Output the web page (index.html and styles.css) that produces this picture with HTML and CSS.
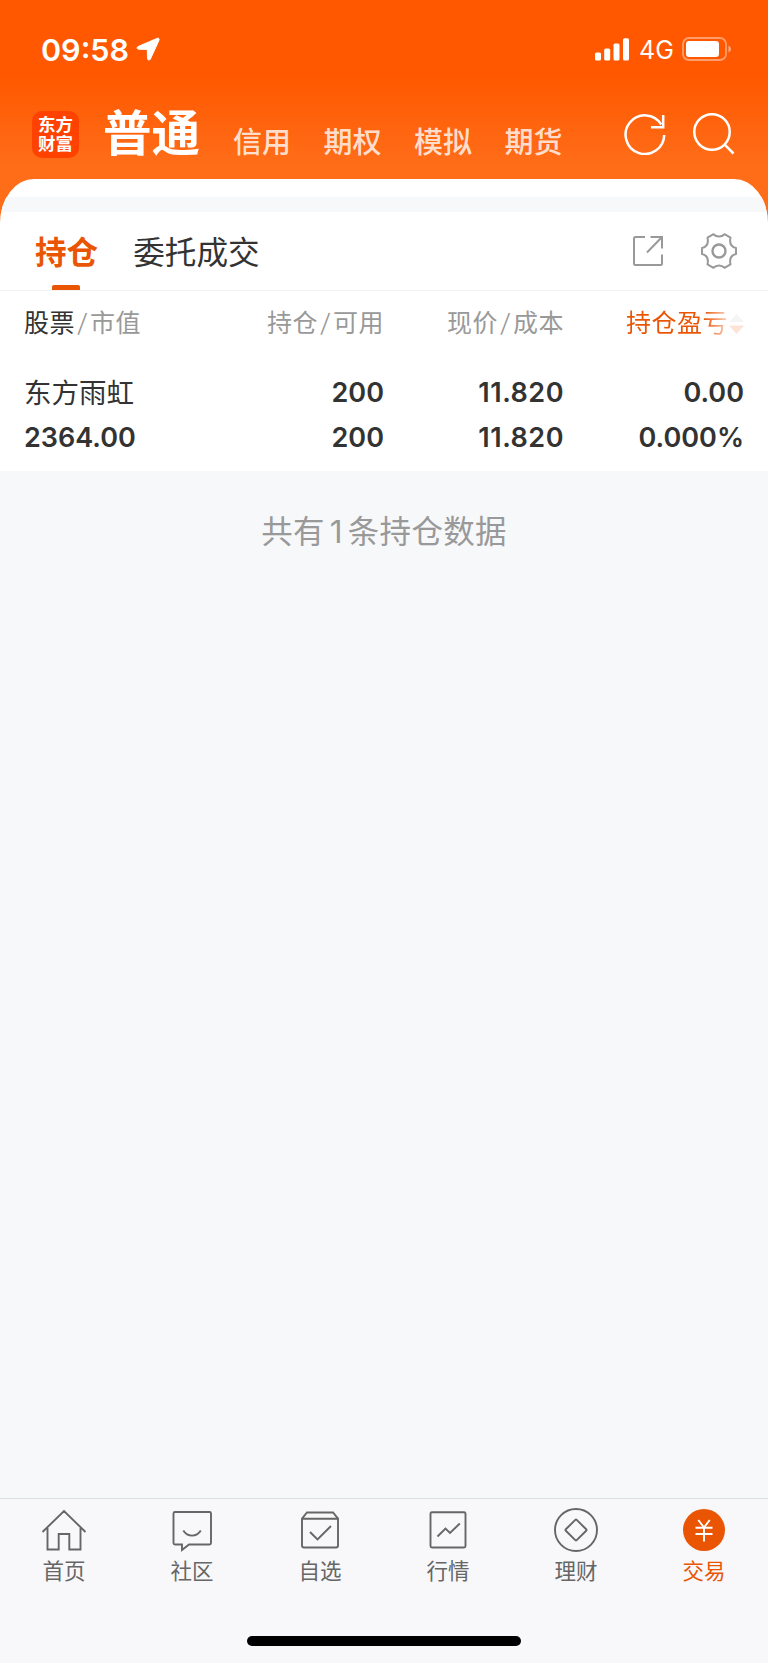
FILE: index.html
```html
<!DOCTYPE html>
<html lang="zh-CN">
<head>
  <meta charset="UTF-8" />
  <meta name="viewport" content="width=device-width, initial-scale=1" />
  <title>东方财富 - 交易</title>
  <link rel="stylesheet" href="styles.css">
</head>
<body>

  <header class="header">
    <div class="status-bar">
      <span class="time">09:58</span>
      <svg class="location" width="24" height="24" viewBox="0 0 24 24"><path d="M21.5 1.2 2 9.6c-1.5.7-1 2.6.5 2.6l8.8.2.2 9c0 1.9 2.2 2.2 2.900.7L23 3.200c.5-1.200-.3-2.400-1.500-2z" fill="#fff" stroke="#fff" stroke-width="1" stroke-linejoin="round"/></svg>
      <div class="status-right">
        <svg width="34" height="23" viewBox="0 0 34 23" fill="#fff">
          <rect x="0" y="14.5" width="6" height="8" rx="1.5"/>
          <rect x="9.2" y="10.5" width="6" height="12" rx="1.5"/>
          <rect x="18.5" y="5.5" width="6" height="17" rx="1.5"/>
          <rect x="28" y="0.3" width="6" height="22.2" rx="1.5"/>
        </svg>
        <span class="network">4G</span>
        <svg width="50" height="24" viewBox="0 0 50 24">
          <rect x="1" y="1" width="43" height="22" rx="6" fill="none" stroke="#fff" stroke-opacity=".42" stroke-width="1.8"/>
          <rect x="4" y="4" width="33" height="16" rx="3" fill="#fff"/>
          <path d="M46.5 8.500c3.300 1.500 3.300 5.500 0 7z" fill="#fff" fill-opacity=".5"/>
        </svg>
      </div>
    </div>

    <div class="nav">
      <div class="logo"><span>东方</span><span>财富</span></div>
      <h1>普通</h1>
      <a>信用</a>
      <a>期权</a>
      <a>模拟</a>
      <a>期货</a>
      <div class="nav-icons">
        <svg width="42" height="42" viewBox="0 0 42 42" fill="none" stroke="#fff" stroke-width="2.5">
          <path d="M40.200 22A19.300 19.300 0 1 1 37.300 11.500"/>
          <path d="M39.200 2v12.200H27"/>
        </svg>
        <svg width="42" height="42" viewBox="0 0 42 42" fill="none" stroke="#fff" stroke-width="2.5">
          <circle cx="19" cy="19" r="17.7"/>
          <path d="M31.200 31.200 40.500 40.500"/>
        </svg>
      </div>
    </div>
  </header>

  <main class="sheet">
    <div class="divider"></div>

    <div class="tabs">
      <div class="tab active">持仓</div>
      <div class="tab">委托成交</div>
      <div class="tab-icons">
        <svg width="30" height="30" viewBox="0 0 30 30" fill="none" stroke="#999" stroke-width="2">
          <path d="M12 1H2.500Q1 1 1 2.500V27.500Q1 29 2.500 29H27.500Q29 29 29 27.500V18.500"/>
          <path d="M17.500 1H29V12.500M29 1 14 16.500"/>
        </svg>
        <svg width="36" height="36" viewBox="0 0 36 36" fill="none" stroke="#999" stroke-width="2" stroke-linejoin="round">
          <path d="M12.500 1.200C15.500 4.300 20.500 4.300 23.500 1.200L29.500 4.600C28.200 10.500 30 13.800 35 15V21C30 22.200 28.200 25.500 29.500 31.400L23.500 34.800C20.500 31.700 15.500 31.700 12.500 34.800L6.500 31.400C7.800 25.500 6 22.200 1 21V15C6 13.800 7.800 10.500 6.500 4.600Z"/>
          <circle cx="18" cy="18" r="6.5" stroke-width="2.400"/>
        </svg>
      </div>
    </div>

    <div class="row table-head">
      <div><span class="dark">股票</span><i>/</i>市值</div>
      <div>持仓<i>/</i>可用</div>
      <div>现价<i>/</i>成本</div>
      <div class="profit">
        <span>持仓盈亏</span>
        <svg width="15" height="22" viewBox="0 0 15 22"><path d="M0 9 7.500 1 15 9z" fill="#f5f5f6"/><path d="M0 12.500 7.500 21 15 12.500z" fill="#fde3d6"/></svg>
      </div>
    </div>

    <div class="row stock">
      <div><span class="name">东方雨虹</span><span>2364.00</span></div>
      <div><span>200</span><span>200</span></div>
      <div><span class="price">11.820</span><span class="price">11.820</span></div>
      <div><span>0.00</span><span>0.000%</span></div>
    </div>
  </main>

  <p class="summary">共有<b>1</b>条持仓数据</p>

  <nav class="tabbar">
    <a class="item">
      <svg width="46" height="46" viewBox="0 0 46 46">
        <path d="M1.500 25 23 4 44.500 25M6.500 21V42.500H17.700V27H28.300V42.500H39.500V21"/>
      </svg>
      <span>首页</span>
    </a>
    <a class="item">
      <svg width="46" height="46" viewBox="0 0 46 46">
        <path d="M6 5H40.500Q42 5 42 6.500V36Q42 37.500 40.500 37.500H20L13 43V37.500H6Q4.500 37.500 4.500 36V6.500Q4.500 5 6 5Z"/>
        <path d="M14.300 23.500C18.500 30.300 27.500 30.300 31.800 23.500"/>
      </svg>
      <span>社区</span>
    </a>
    <a class="item">
      <svg width="46" height="46" viewBox="0 0 46 46">
        <path d="M5 11.700H41V38.500Q41 40.500 39 40.500H7Q5 40.500 5 38.500V11.700L10 5.500H36L41 11.700"/>
        <path d="M13 25 20.500 32.500 34 19"/>
      </svg>
      <span>自选</span>
    </a>
    <a class="item">
      <svg width="46" height="46" viewBox="0 0 46 46">
        <rect x="5.500" y="5.300" width="35" height="35.200" rx="1.500"/>
        <path d="M12.500 29.500 20.500 21.500 25 26 34.800 16.500"/>
      </svg>
      <span>行情</span>
    </a>
    <a class="item">
      <svg width="46" height="46" viewBox="0 0 46 46">
        <circle cx="23" cy="23" r="21"/>
        <rect x="15.300" y="15.300" width="15.400" height="15.400" rx="1" transform="rotate(45 23 23)"/>
      </svg>
      <span>理财</span>
    </a>
    <a class="item current">
      <svg width="46" height="46" viewBox="0 0 46 46">
        <circle class="coin" cx="23" cy="23" r="21"/>
        <path class="yen" d="M17.300 13 23 20.500 28.700 13M14.500 20.700H31.500M14.500 27H31.500M23 20.500V34.500"/>
      </svg>
      <span>交易</span>
    </a>
    <div class="home-indicator"></div>
  </nav>

</body>
</html>
```

FILE: styles.css
```css
* { box-sizing: border-box; margin: 0; padding: 0; }

body {
  display: flex;
  flex-direction: column;
  height: 1663px;
  background: #f7f8fa;
  color: #333;
  font-family: Inter, "Noto Sans CJK SC", sans-serif;
}

.header {
  height: 230px;
  background: linear-gradient(#ff5800 0, #ff5800 76px, #ff6d19 165px, #ff6d19 100%);
  color: #fff;
}

.status-bar {
  display: flex;
  align-items: center;
  height: 98px;
  padding: 0 36px 0 41px;
}

.time {
  width: 95px;
  font-size: 30.5px;
  font-weight: 600;
  white-space: nowrap;
}

.status-right {
  display: flex;
  align-items: center;
  margin-left: auto;
}

.network {
  width: 53px;
  padding-left: 10px;
  font-size: 25px;
  font-weight: 400;
  line-height: 24px;
  padding-top: 2px;
}

.nav {
  display: flex;
  align-items: center;
  height: 72px;
  padding: 0 33px 0 32px;
}

.logo {
  display: flex;
  flex-direction: column;
  align-items: center;
  justify-content: center;
  width: 47px;
  height: 47px;
  border-radius: 10px;
  background: #ff4200;
  font-size: 17.5px;
  font-weight: 700;
  line-height: 19px;
}

.nav h1 {
  margin: 0 33px 0 24px;
  font-size: 48.5px;
  font-weight: 700;
  line-height: 60px;
}

.nav a {
  width: 90.5px;
  padding-top: 17px;
  color: rgba(255, 255, 255, 0.8);
  font-size: 29px;
  font-weight: 500;
  line-height: 40px;
}

.nav-icons {
  display: flex;
  gap: 27px;
  margin-left: auto;
}

.sheet {
  height: 292px;
  margin-top: -51px;
  padding-top: 18px;
  border-radius: 34px 34px 0 0 / 44px 44px 0 0;
  background: #fff;
  overflow: hidden;
}

.divider {
  height: 15px;
  background: #f7f8fa;
}

.tabs {
  display: flex;
  align-items: center;
  height: 79px;
  padding: 0 31px 0 35px;
  border-bottom: 1px solid #f2f2f3;
}

.tab {
  position: relative;
  height: 78px;
  margin-right: 35px;
  font-size: 31.6px;
  line-height: 81px;
}

.tab.active {
  color: #ea5504;
  font-weight: 600;
}

.tab.active::after {
  content: "";
  position: absolute;
  left: 17px;
  bottom: 0;
  width: 28px;
  height: 5px;
  border-radius: 2px 2px 0 0;
  background: #ea5504;
}

.tab-icons {
  display: flex;
  align-items: center;
  gap: 38px;
  margin-left: auto;
}

.row {
  display: grid;
  grid-template-columns: 180px 180px 180px 180px;
  padding: 0 24px;
}

.row > div {
  text-align: right;
}

.row > div:first-child {
  text-align: left;
}

.table-head {
  color: #999;
  font-size: 25px;
  line-height: 65px;
  letter-spacing: 0.5px;
}

.table-head i {
  display: inline-block;
  width: 15px;
  font-style: normal;
  font-weight: 300;
  text-align: center;
  transform: skewX(-6deg);
}

.dark {
  color: #333;
}

.table-head .profit {
  display: flex;
  align-items: center;
  justify-content: flex-end;
}

.profit span {
  margin-right: 1px;
  background: linear-gradient(90deg, #ea5504 0, #ea5504 76%, #fbd2be 100%);
  background-clip: text;
  -webkit-background-clip: text;
  color: transparent;
}

.stock {
  padding: 14px 24px 0;
  font-size: 27px;
  font-weight: 600;
  line-height: 46px;
}

.stock span {
  display: block;
  height: 45px;
}

.stock .price {
  letter-spacing: 0.5px;
}

.stock .name {
  font-size: 27.5px;
  font-weight: 400;
  line-height: 47px;
}

.summary {
  margin-top: 38px;
  color: #999;
  font-size: 31.5px;
  line-height: 46px;
  letter-spacing: 0.3px;
  text-align: center;
}

.summary b {
  display: inline-block;
  width: 23px;
  font-weight: 400;
}

.tabbar {
  display: grid;
  grid-template-columns: repeat(6, 1fr);
  justify-items: center;
  height: 165px;
  margin-top: auto;
  padding-top: 8px;
  border-top: 1px solid #dedfe1;
  background: #f8f8fa;
}

.item {
  display: flex;
  flex-direction: column;
  align-items: center;
  color: #666;
  font-size: 21.5px;
  line-height: 32px;
}

.item svg {
  margin-bottom: 2px;
  fill: none;
  stroke: #666;
  stroke-width: 1.9;
}

.item.current {
  color: #ea5504;
}

.item .coin {
  fill: #ea5504;
  stroke: none;
}

.item .yen {
  stroke: #fff;
}

.home-indicator {
  grid-column: 1 / -1;
  align-self: end;
  width: 274px;
  height: 10px;
  margin-bottom: 17px;
  border-radius: 5px;
  background: #000;
}
```
